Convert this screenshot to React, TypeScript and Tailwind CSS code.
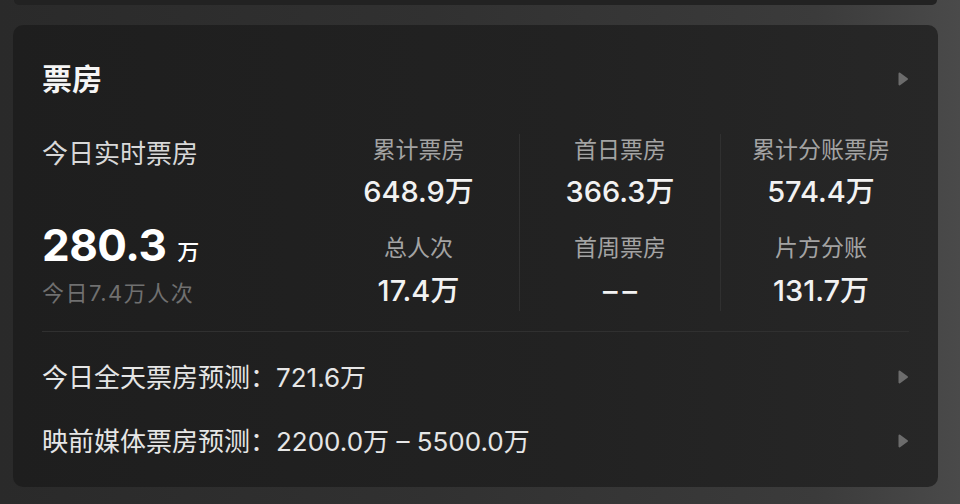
import React from "react";

// box office card — dark theme
const STATS = [
  { top: { label: "累计票房", value: "648.9万" }, bottom: { label: "总人次", value: "17.4万" } },
  { top: { label: "首日票房", value: "366.3万" }, bottom: { label: "首周票房", value: "––" } },
  { top: { label: "累计分账票房", value: "574.4万" }, bottom: { label: "片方分账", value: "131.7万" } },
];

function Arrow() {
  return (
    <svg width="12" height="16" viewBox="0 0 12 16" className="shrink-0">
      <path d="M2.5 2.5 L10 8 L2.5 13.5 Z" fill="#6c6c6c" stroke="#6c6c6c" strokeWidth="2" strokeLinejoin="round" />
    </svg>
  );
}

function StatCol({ col, first }: { col: (typeof STATS)[number]; first?: boolean }) {
  const empty = col.bottom.value === "––";
  return (
    <div className={"flex flex-col items-center " + (first ? "" : "border-l border-[#303030]")}>
      <div className="text-[23px] leading-[32px] text-[#a3a3a3]">{col.top.label}</div>
      <div className="mt-[6px] text-[29px] leading-[40px] font-medium text-[#f2f2f2]">{col.top.value}</div>
      <div className="mt-[20px] text-[23px] leading-[32px] text-[#a3a3a3]">{col.bottom.label}</div>
      <div
        className={
          "mt-[7px] text-[29px] leading-[40px] font-medium text-[#f2f2f2] " +
          (empty ? "tracking-[5px] pl-[5px]" : "")
        }
      >
        {col.bottom.value}
      </div>
    </div>
  );
}

export default function App() {
  return (
    <div className="w-[960px] h-[504px] overflow-hidden bg-[linear-gradient(90deg,#2a2a2a_0%,#313131_45%,#3b3b3b_85%,#4a4a4a_100%)] font-['Inter','Noto_Sans_CJK_SC',sans-serif]">
      <div className="ml-[14px] mr-[23px] h-[5px] rounded-b-[8px] bg-[#222222]" />
      <div className="mt-[20px] ml-[13px] w-[925px] h-[462px] rounded-[10px] bg-[linear-gradient(90deg,#1e1e1e_0%,#222222_60%,#272727_100%)] px-[29px] pt-[36px]">
        <div className="h-[36px] flex items-center justify-between">
          <span className="text-[30px] font-semibold text-[#f5f5f5]">票房</span>
          <Arrow />
        </div>

        <div className="mt-[37px] grid grid-cols-[276px_201px_201px_201px]">
          <div className="flex flex-col">
            <div className="mt-[4px] text-[26px] leading-[32px] text-[#d8d8d8]">今日实时票房</div>
            <div className="mt-[49px] h-[52px] flex items-end leading-[52px]">
              <span className="text-[44px] font-bold text-white tracking-[-0.5px]">280.3</span>
              <span className="ml-[11px] mb-[1px] text-[22px] leading-[36px] font-medium text-white">万</span>
            </div>
            <div className="mt-[8px] text-[22px] leading-[28px] tracking-[1.5px] text-[#707070]">今日7.4万人次</div>
          </div>
          {STATS.map((c, i) => (
            <StatCol key={i} col={c} first={i === 0} />
          ))}
        </div>

        <div className="mt-[20px] h-px bg-[#303030]" />

        <div className="mt-[27px] h-[36px] flex items-center justify-between">
          <span className="text-[26px] text-[#e6e6e6]">今日全天票房预测：721.6万</span>
          <Arrow />
        </div>
        <div className="mt-[28px] h-[36px] flex items-center justify-between">
          <span className="text-[26px] text-[#e6e6e6]">映前媒体票房预测：2200.0万 – 5500.0万</span>
          <Arrow />
        </div>
      </div>
    </div>
  );
}
